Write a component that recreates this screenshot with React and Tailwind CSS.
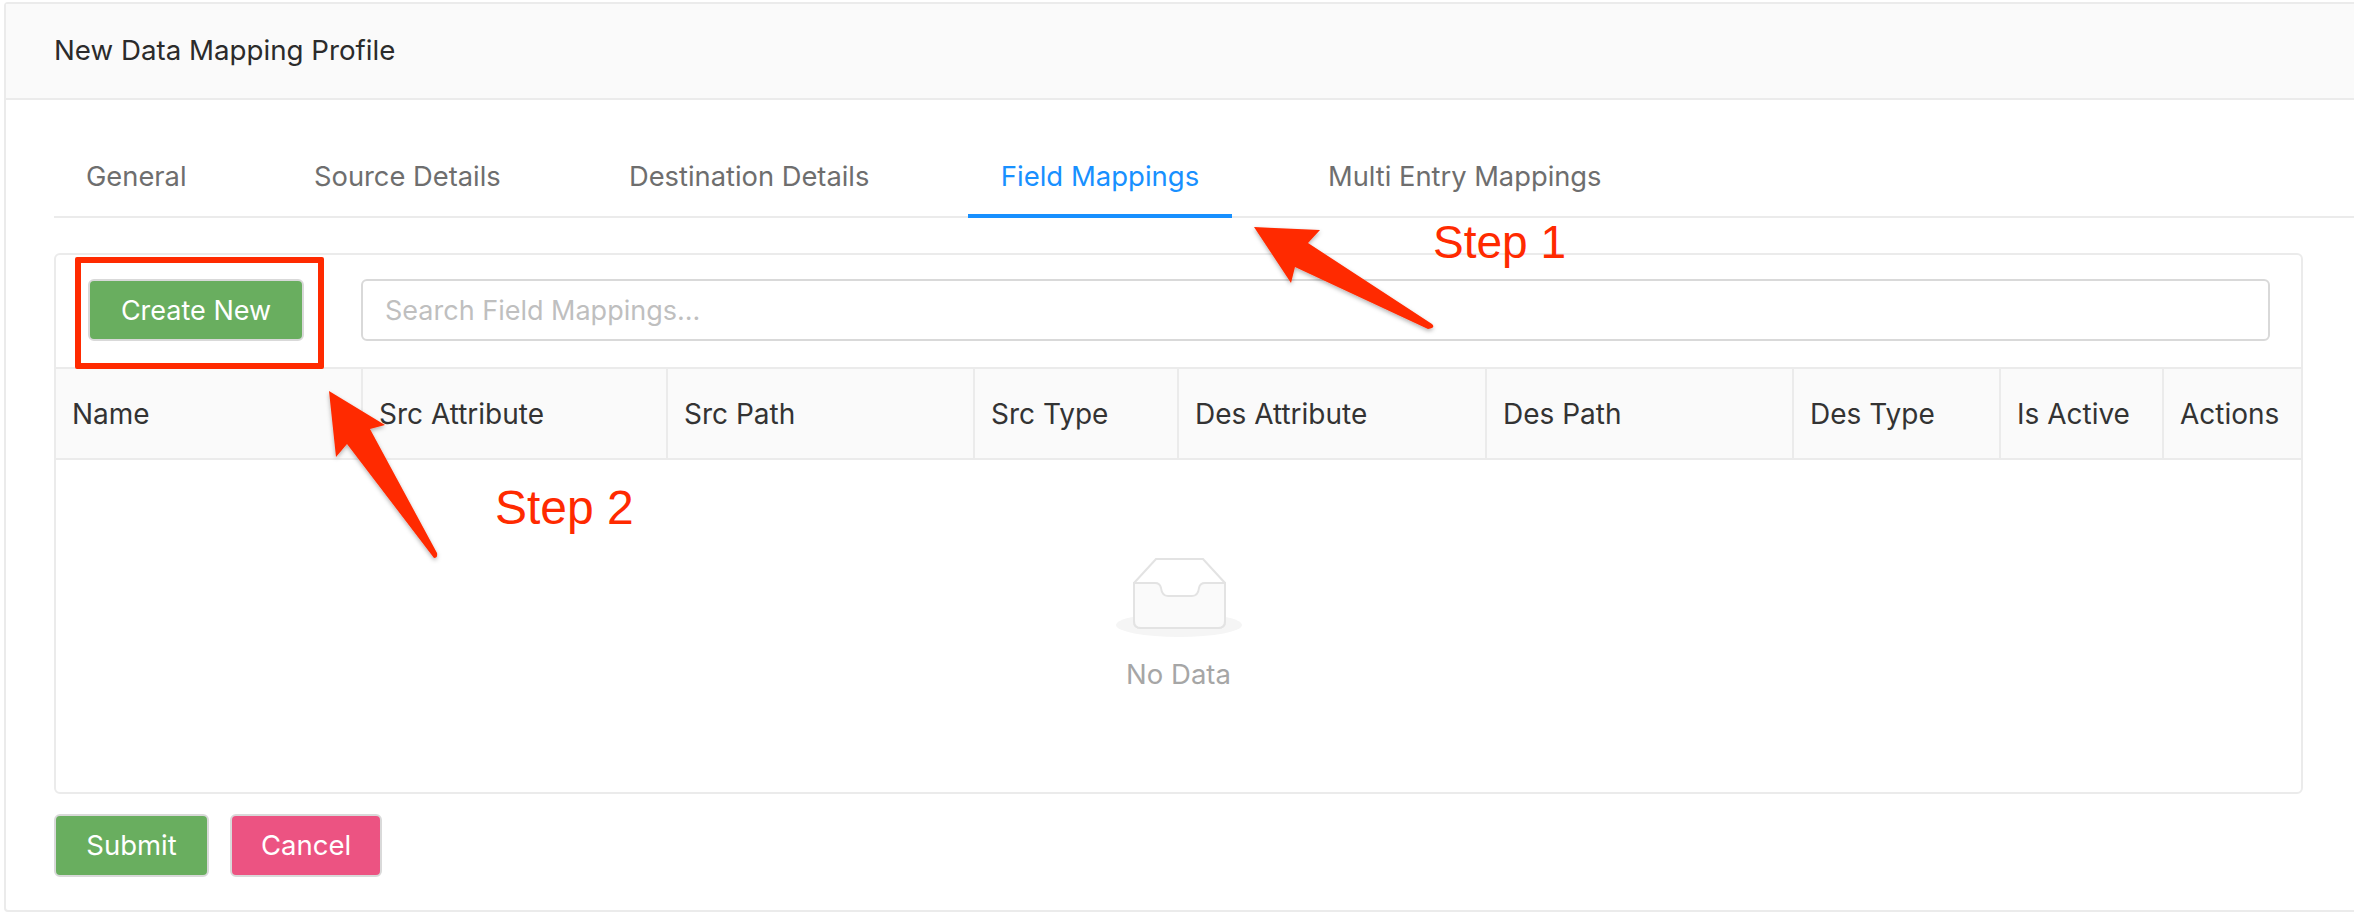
import React from 'react';

const tabs = [
  { name: 'General', className: 'w-[228px]' },
  { name: 'Source Details', className: 'w-[315px]' },
  { name: 'Destination Details', className: 'w-[371px]' },
];

const columns = [
  { name: 'Name', className: 'w-[307px]' },
  { name: 'Src Attribute', className: 'w-[305px]' },
  { name: 'Src Path', className: 'w-[307px]' },
  { name: 'Src Type', className: 'w-[204px]' },
  { name: 'Des Attribute', className: 'w-[308px]' },
  { name: 'Des Path', className: 'w-[307px]' },
  { name: 'Des Type', className: 'w-[207px]' },
  { name: 'Is Active', className: 'w-[163px]' },
  { name: 'Actions', className: 'flex-1' },
];

function EmptyIcon() {
  return (
    <svg width="130" height="80" viewBox="0 0 130 80" className="block">
      <ellipse cx="65" cy="67" rx="63" ry="12" fill="#f5f5f5" />
      <path d="M20 25 L42 1 L89 1 L111 25 L111 63 Q111 70 104 70 L27 70 Q20 70 20 63 Z" fill="#fff" stroke="#e3e3e3" strokeWidth="2" />
      <path
        d="M20 25 L41 25 Q46 25 47 30 Q48 38 54 38 L78 38 Q84 38 85 30 Q86 25 91 25 L111 25 L111 63 Q111 70 104 70 L27 70 Q20 70 20 63 Z"
        fill="#fafafa"
        stroke="#e3e3e3"
        strokeWidth="2"
      />
    </svg>
  );
}

function Annotations() {
  return (
    <>
      <div className="absolute left-[75px] top-[257px] w-[249px] h-[112px] border-[6px] border-[#ff2a00] rounded-[2px]" />
      <svg className="absolute left-0 top-0 pointer-events-none" width="2354" height="922">
        <defs>
          <filter id="arrow-shadow" x="-20%" y="-20%" width="140%" height="140%">
            <feDropShadow dx="0" dy="2" stdDeviation="2" floodColor="#000" floodOpacity="0.3" />
          </filter>
        </defs>
        <path
          d="M1254 227 L1320 230 L1308 243 L1432 324 Q1436 328 1428 329 L1295 267 L1291 283 Z"
          fill="#ff2a00"
          filter="url(#arrow-shadow)"
        />
        <path
          d="M329 391 L385 425 L370 429 L437 553 Q438 558 434 558 L347 444 L336 457 Z"
          fill="#ff2a00"
          filter="url(#arrow-shadow)"
        />
      </svg>
      <div className="absolute left-[1433px] top-[216px] text-[46px] leading-[52px] text-[#ff2a00] font-['Liberation_Sans',sans-serif]">
        Step 1
      </div>
      <div className="absolute left-[495px] top-[482px] text-[48px] leading-[52px] text-[#ff2a00] font-['Liberation_Sans',sans-serif]">
        Step 2
      </div>
    </>
  );
}

export default function App() {
  return (
    <div className="relative w-[2354px] h-[922px] overflow-hidden bg-white pl-[4px] pt-[2px] font-['Inter',sans-serif] text-[27.5px] text-[#333]">
      <div className="w-[2360px] h-[910px] border-2 border-[#ebebeb] rounded-[4px]">
        <div className="h-[96px] bg-[#fafafa] border-b-2 border-[#ebebeb] flex items-center pl-[48px] text-[27.7px] text-[#2b2b2b]">
          New Data Mapping Profile
        </div>

        <div className="pl-[48px]">
          <div className="flex h-[118px] border-b-2 border-[#ebebeb] text-[#6e6e6e] text-[27.3px]">
            {tabs.map((tab) => (
              <div key={tab.name} className={`${tab.className} flex items-center mt-[36px] pt-[2px] pl-[32px] shrink-0`}>
                {tab.name}
              </div>
            ))}
            <div className="w-[264px] shrink-0 mt-[36px] h-[82px] pt-[3px] flex items-center justify-center text-[27.5px] text-[#1890ff] border-b-[4px] border-[#1890ff]">
              Field Mappings
            </div>
            <div className="mt-[36px] pt-[2px] pl-[96px] flex items-center shrink-0">Multi Entry Mappings</div>
          </div>

          <div className="mt-[35px] w-[2249px] h-[541px] border-2 border-[#ebebeb] rounded-[6px] flex flex-col">
            <div className="h-[112px] flex items-start pt-[24px] pl-[32px] pr-[31px] shrink-0 text-[27px]">
              <button className="w-[216px] h-[62px] pt-[2px] bg-[#69ae5f] border-2 border-[#d9d9d9] rounded-[6px] text-white">
                Create New
              </button>
              <input
                placeholder="Search Field Mappings..."
                className="ml-[57px] flex-1 h-[62px] border-2 border-[#d9d9d9] rounded-[6px] px-[22px] outline-none placeholder:text-[#bfbfbf]"
              />
            </div>

            <div className="flex h-[93px] shrink-0 bg-[#fafafa] border-y-2 border-[#ebebeb] text-[28px]">
              {columns.map((col, i) => (
                <div
                  key={col.name}
                  className={`${col.className} flex items-center pl-[16px] ${i < columns.length - 1 ? 'border-r-2 border-[#ebebeb]' : ''}`}
                >
                  {col.name}
                </div>
              ))}
            </div>

            <div className="flex-1 flex flex-col items-center pt-[98px]">
              <EmptyIcon />
              <div className="mt-[16px] text-[#a6a6a6]">No Data</div>
            </div>
          </div>

          <div className="flex gap-[21px] mt-[20px]">
            <button className="w-[155px] h-[63px] bg-[#69ae5f] border-2 border-[#d9d9d9] rounded-[6px] text-white">
              Submit
            </button>
            <button className="w-[152px] h-[63px] bg-[#ec5382] border-2 border-[#d9d9d9] rounded-[6px] text-white">
              Cancel
            </button>
          </div>
        </div>
      </div>
      <Annotations />
    </div>
  );
}
